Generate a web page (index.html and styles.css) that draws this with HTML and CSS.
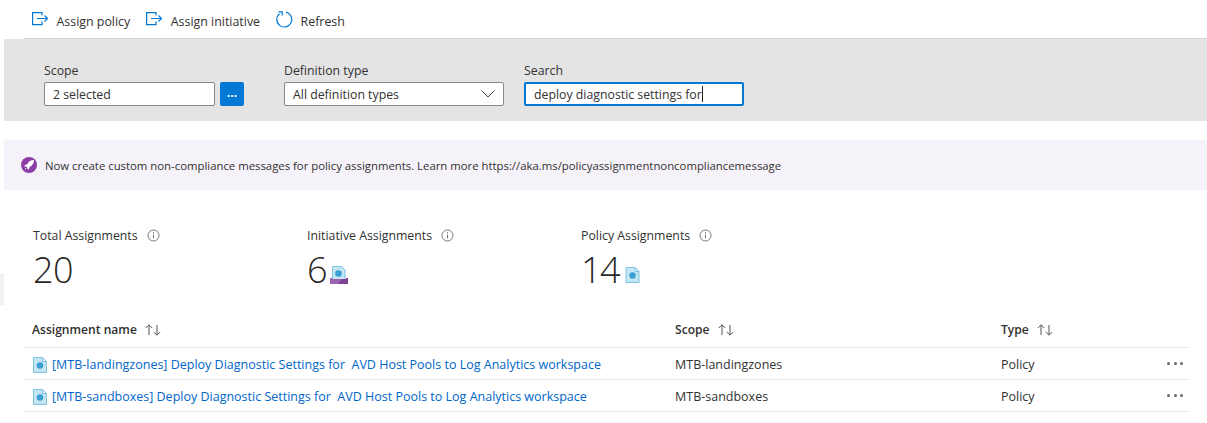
FILE: index.html
```html
<!DOCTYPE html>
<html lang="en">
<head>
  <meta charset="UTF-8">
  <title>Policy assignments</title>
  <link rel="stylesheet" href="styles.css">
</head>
<body>

  <svg class="defs" width="0" height="0">
    <symbol id="assign" viewBox="0 0 17 14">
      <path d="M10 3.500V.6H.6v12H10V9.500M5 6.500h10.500M12.500 3.500l3 3-3 3" fill="none" stroke="#0078d4" stroke-width="1.200"/>
    </symbol>
    <symbol id="policy" viewBox="0 0 14 16">
      <path d="M.5.5h9l4 4v11H.5z" fill="#c4e6f4" stroke="#7fc4e2"/>
      <path d="M9.5.5v4h4z" fill="#eaf6fb" stroke="#7fc4e2"/>
      <circle cx="7" cy="8.5" r="3.2" fill="#3b9fd2"/>
    </symbol>
    <symbol id="info" viewBox="0 0 13 13">
      <circle cx="6.5" cy="6.500" r="5.5" fill="none" stroke="#777"/>
      <path d="M6.5 5.5v4M6.5 3.2v1.3" stroke="#777"/>
    </symbol>
    <symbol id="sort" viewBox="0 0 17 12">
      <path d="M4 11V1M.8 4L4 .8 7.200 4M12 1v10M8.800 8l3.200 3.200L15.200 8" fill="none" stroke="#555"/>
    </symbol>
  </svg>

  <div class="toolbar">
    <button class="tool"><svg class="tool-icon"><use href="#assign"/></svg>Assign policy</button>
    <button class="tool"><svg class="tool-icon"><use href="#assign"/></svg>Assign initiative</button>
    <button class="tool">
      <svg class="tool-icon refresh" viewBox="0 0 17 17"><path d="M10 1.200a7.500 7.500 0 1 1-6.500 1.500M2.500.8h3.700v3.700" fill="none" stroke="#0078d4" stroke-width="1.200"/></svg>
      Refresh
    </button>
  </div>

  <div class="filters">
    <div class="field field-scope">
      <label>Scope</label>
      <div class="scope-row">
        <div class="box scope-box">2 selected</div>
        <div class="more-btn">...</div>
      </div>
    </div>
    <div class="field field-type">
      <label>Definition type</label>
      <div class="box type-box">
        All definition types
        <svg class="chevron" viewBox="0 0 14 8"><path d="M.5.5L7 7l6.500-6.500" fill="none" stroke="#444"/></svg>
      </div>
    </div>
    <div class="field">
      <label>Search</label>
      <div class="box search-box">deploy diagnostic settings for<span class="caret"></span></div>
    </div>
  </div>

  <div class="banner">
    <svg class="rocket" viewBox="0 0 16 16">
      <circle cx="8" cy="8" r="8" fill="#8a3ea6"/>
      <path d="M13 3c-3.200 0-5.500 1.500-6.800 4.200L4 8l-.8 1.400 2 .2 1.200 1.200.2 2 1.400-.8.800-2.200C11.500 8.500 13 6.200 13 3zM4.800 10.600l-1.300 2 2-1.300z" fill="#fff"/>
    </svg>
    Now create custom non-compliance messages for policy assignments. Learn more https://aka.ms/policyassignmentnoncompliancemessage
  </div>

  <div class="stats">
    <div class="stat stat-total">
      <div class="stat-label">Total Assignments <svg class="info"><use href="#info"/></svg></div>
      <div class="stat-value">20</div>
    </div>
    <div class="stat stat-initiative">
      <div class="stat-label">Initiative Assignments <svg class="info"><use href="#info"/></svg></div>
      <div class="stat-value">6
        <svg class="stat-icon" viewBox="0 0 18 18">
          <path d="M2.500.5h9l3.500 3.500v10H2.500z" fill="#c4e6f4" stroke="#7fc4e2"/>
          <circle cx="8.500" cy="7.500" r="3.300" fill="#3b9fd2"/>
          <path d="M0 12h2v1h14v-1h2v6H0z" fill="#9b64ad"/>
          <path d="M8 18l4-5h4v-1h2v6z" fill="#7f4194"/>
        </svg>
      </div>
    </div>
    <div class="stat">
      <div class="stat-label">Policy Assignments <svg class="info"><use href="#info"/></svg></div>
      <div class="stat-value stat-value-tight">14 <svg class="stat-icon small"><use href="#policy"/></svg></div>
    </div>
  </div>

  <div class="edge"></div>

  <div class="table">
    <div class="row head">
      <div class="col-name">Assignment name <svg class="sort"><use href="#sort"/></svg></div>
      <div class="col-scope">Scope <svg class="sort"><use href="#sort"/></svg></div>
      <div class="col-type">Type <svg class="sort"><use href="#sort"/></svg></div>
    </div>
    <div class="row">
      <div class="col-name"><svg class="row-icon"><use href="#policy"/></svg><a href="#">[MTB-landingzones] Deploy Diagnostic Settings for&nbsp; AVD Host Pools to Log Analytics workspace</a></div>
      <div class="col-scope">MTB-landingzones</div>
      <div class="col-type">Policy</div>
      <div class="dots"><i></i><i></i><i></i></div>
    </div>
    <div class="row">
      <div class="col-name"><svg class="row-icon"><use href="#policy"/></svg><a href="#">[MTB-sandboxes] Deploy Diagnostic Settings for&nbsp; AVD Host Pools to Log Analytics workspace</a></div>
      <div class="col-scope">MTB-sandboxes</div>
      <div class="col-type">Policy</div>
      <div class="dots"><i></i><i></i><i></i></div>
    </div>
  </div>

</body>
</html>
```

FILE: styles.css
```css
body {
  font-family: 'Open Sans', sans-serif;
  font-size: 12.3px;
  margin: 0;
  color: #323130;
  background: #fff;
  height: 423px;
  overflow: hidden;
  position: relative;
}

.defs {
  position: absolute;
}

.toolbar {
  display: flex;
  height: 38px;
  margin-left: 24px;
  padding-left: 8px;
  gap: 16px;
  border-bottom: 1px solid #d2d2d2;
}

.tool {
  display: flex;
  align-items: center;
  border: 0;
  background: none;
  padding: 0;
  font: inherit;
  font-size: 12.4px;
  color: #323130;
  height: 42px;
}

.tool-icon {
  width: 17px;
  height: 14px;
  margin-right: 7.500px;
  margin-top: -4px;
}

.refresh {
  height: 17px;
}

.filters {
  display: flex;
  margin-left: 4px;
  height: 82px;
  background: #e4e4e4;
  padding: 24px 0 0 40px;
  box-sizing: border-box;
}

.field-scope {
  margin-right: 40px;
}

.field-type {
  margin-right: 20px;
}

.field label {
  display: block;
  height: 19px;
  line-height: 16px;
}

.scope-row {
  display: flex;
  gap: 5px;
}

.box {
  height: 24px;
  line-height: 24px;
  box-sizing: border-box;
  background: #fff;
  border: 1px solid #8a8886;
  border-radius: 2px;
  padding-left: 8px;
}

.scope-box {
  width: 171px;
}

.more-btn {
  width: 24px;
  height: 24px;
  background: #0078d4;
  border-radius: 2px;
  color: #fff;
  text-align: center;
  font-weight: bold;
  line-height: 22px;
}

.type-box {
  width: 220px;
  position: relative;
}

.chevron {
  position: absolute;
  right: 8px;
  top: 7px;
  width: 14px;
  height: 8px;
}

.search-box {
  width: 220px;
  border: 2px solid #0078d4;
  line-height: 22px;
}

.caret {
  display: inline-block;
  width: 1px;
  height: 16px;
  background: #222;
  vertical-align: -3px;
}

.banner {
  display: flex;
  align-items: center;
  margin: 19px 0 0 4px;
  height: 50px;
  padding-left: 17px;
  background: #f6f2fa;
  font-size: 11.35px;
}

.rocket {
  width: 16px;
  height: 16px;
  margin-right: 8px;
}

.stats {
  display: flex;
  margin: 36px 0 0 33px;
}

.stat-total {
  width: 274px;
}

.stat-initiative {
  width: 274px;
}

.stat-label {
  height: 19px;
  line-height: 18px;
  display: flex;
  align-items: center;
  gap: 9px;
}

.info {
  width: 13px;
  height: 13px;
}

.stat-value {
  font-size: 36px;
  font-weight: 300;
  line-height: 50px;
  letter-spacing: -0.5px;
  display: flex;
  align-items: center;
  color: #292827;
}

.stat-value-tight {
  letter-spacing: -1.5px;
}

.stat-icon {
  width: 18px;
  height: 18px;
  margin: 9px 0 0 3px;
}

.stat-icon.small {
  width: 15px;
  height: 16px;
  margin-left: 6px;
  margin-top: 9px;
}

.edge {
  position: absolute;
  left: 0;
  top: 273px;
  width: 4px;
  height: 32px;
  background: #f2f2f2;
}

.table {
  margin: 17px 19px 0 24px;
}

.row {
  display: flex;
  align-items: center;
  height: 32px;
  border-bottom: 1px solid #e8e8e8;
  box-sizing: border-box;
  padding: 2px 0 0 8px;
  position: relative;
  font-size: 12.5px;
}

.head {
  height: 36px;
  font-size: 12.1px;
  font-weight: 600;
  padding-top: 0;
}

.col-name {
  width: 643px;
  display: flex;
  align-items: center;
}

.col-scope {
  width: 326px;
  display: flex;
  align-items: center;
}

.col-type {
  display: flex;
  align-items: center;
}

.sort {
  width: 17px;
  height: 12px;
  margin-left: 8px;
}

.row-icon {
  width: 14px;
  height: 16px;
  margin: 0 5px 0 1px;
}

a {
  color: #0066c8;
  text-decoration: none;
}

.dots {
  position: absolute;
  right: 5px;
  top: 14px;
  display: flex;
  gap: 3.500px;
}

.dots i {
  width: 3px;
  height: 3px;
  border-radius: 50%;
  background: #666;
}
```
